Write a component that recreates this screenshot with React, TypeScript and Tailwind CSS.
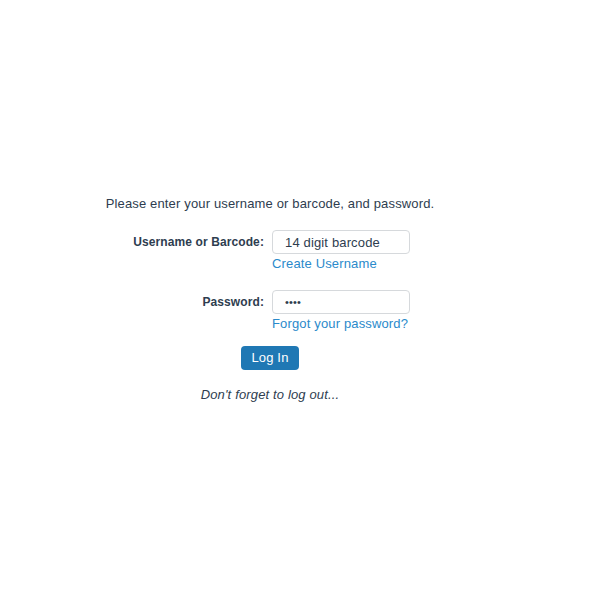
import React from 'react';

export default function App() {
  return (
    <div className="min-h-[600px] w-[600px] bg-white font-['Liberation_Sans',Arial,sans-serif] text-[13px] tracking-[0.15px] text-[#2e3d4f]">
      <div className="w-[540px] pt-[196px] flex flex-col items-center">
        <p className="leading-4">Please enter your username or barcode, and password.</p>

        {/* Username row */}
        <div className="mt-[18px] flex w-[540px] gap-2">
          <label className="w-[264px] h-6 flex items-center justify-end font-bold text-[12px] tracking-[0.1px]">Username or Barcode:</label>
          <div className="flex flex-col items-start">
            <input
              defaultValue="14 digit barcode"
              className="w-[138px] h-6 rounded border border-[#d6d9dc] px-3 text-[13px] text-[#2e3d4f] outline-none"
            />
            <a href="#" className="text-[#2b8acb] leading-4 mt-[2px]">Create Username</a>
          </div>
        </div>

        {/* Password row */}
        <div className="mt-[18px] flex w-[540px] gap-2">
          <label className="w-[264px] h-6 flex items-center justify-end font-bold text-[12px] tracking-[0.1px]">Password:</label>
          <div className="flex flex-col items-start">
            <input
              type="password"
              defaultValue="1234"
              className="w-[138px] h-6 rounded border border-[#d6d9dc] px-3 text-[11px] text-[#2e3d4f] outline-none"
            />
            <a href="#" className="text-[#2b8acb] leading-4 mt-[2px]">Forgot your password?</a>
          </div>
        </div>

        <button className="mt-[14px] h-6 px-[10px] rounded bg-[#1f78b4] text-white text-[13px] leading-4">Log In</button>

        <p className="mt-[17px] italic leading-4">Don't forget to log out...</p>
      </div>
    </div>
  );
}
